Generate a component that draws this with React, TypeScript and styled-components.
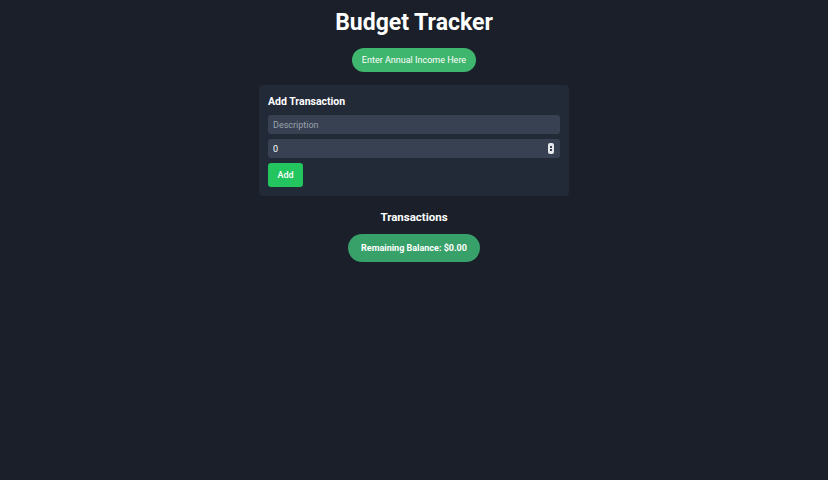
import styled, { createGlobalStyle } from "styled-components";

const GlobalStyle = createGlobalStyle`
	html, body {
		margin: 0;
		padding: 0;
		background-color: #1a1f29;
		color: #ffffff;
		font-family: Roboto, "Liberation Sans", sans-serif;
	}
	* {
		box-sizing: border-box;
	}
`;

const Page = styled.div`
	display: flex;
	flex-direction: column;
	align-items: center;
	min-height: 480px;
	padding-top: 8px;
`;

const Title = styled.h1`
	margin: 0;
	font-size: 23px;
	font-weight: 700;
	line-height: 30px;
`;

const PillButton = styled.button<{ $bold?: boolean; $color: string }>`
	border: none;
	border-radius: 999px;
	background-color: ${(props) => props.$color};
	color: #ffffff;
	font-family: inherit;
	font-size: 9px;
	font-weight: ${(props) => (props.$bold ? 700 : 400)};
	cursor: pointer;
`;

const IncomeButton = styled(PillButton)`
	margin-top: 10px;
	height: 24px;
	padding: 0 10px;
`;

const Card = styled.div`
	margin-top: 13px;
	width: 310px;
	padding: 10px 9px 9px;
	background-color: #222937;
	border-radius: 4px;
	display: flex;
	flex-direction: column;
	gap: 5px;
`;

const CardTitle = styled.h3`
	margin: 0 0 1px;
	font-size: 10.5px;
	font-weight: 700;
	line-height: 14px;
`;

const FieldWrap = styled.div`
	position: relative;
`;

const Field = styled.input`
	display: block;
	width: 100%;
	height: 19px;
	border: none;
	border-radius: 3px;
	background-color: #374151;
	color: #ffffff;
	font-family: inherit;
	font-size: 9px;
	padding: 0 5px;
	outline: none;

	&::placeholder {
		color: #9ca3af;
	}
	&::-webkit-inner-spin-button,
	&::-webkit-outer-spin-button {
		-webkit-appearance: none;
		margin: 0;
	}
`;

const Spinner = styled.span`
	position: absolute;
	right: 6px;
	top: 4px;
	width: 6px;
	height: 11px;
	border-radius: 2px;
	background-color: #e5e7eb;
	display: flex;
	flex-direction: column;
	align-items: center;
	justify-content: space-around;
	padding: 2px 0;

	&::before,
	&::after {
		content: "";
		width: 2px;
		height: 2px;
		background-color: #374151;
	}
`;

const AddButton = styled.button`
	display: block;
	width: 35px;
	height: 24px;
	border: none;
	border-radius: 3px;
	background-color: #22c55e;
	color: #ffffff;
	font-family: inherit;
	font-size: 9px;
	font-weight: 500;
	cursor: pointer;
`;

const SectionTitle = styled.h2`
	margin: 14px 0 0;
	font-size: 11.5px;
	font-weight: 700;
	line-height: 14px;
`;

const BalanceButton = styled(PillButton)`
	margin-top: 10px;
	height: 28px;
	padding: 0 13px;
`;

export default function App() {
	return (
		<>
			<GlobalStyle />
			<Page>
				<Title>Budget Tracker</Title>
				<IncomeButton $color="#3fb66e">Enter Annual Income Here</IncomeButton>
				<Card>
					<CardTitle>Add Transaction</CardTitle>
					<Field type="text" placeholder="Description" />
					<FieldWrap>
						<Field type="number" defaultValue={0} />
						<Spinner />
					</FieldWrap>
					<AddButton>Add</AddButton>
				</Card>
				<SectionTitle>Transactions</SectionTitle>
				<BalanceButton $bold $color="#38a169">
					Remaining Balance: $0.00
				</BalanceButton>
			</Page>
		</>
	);
}
